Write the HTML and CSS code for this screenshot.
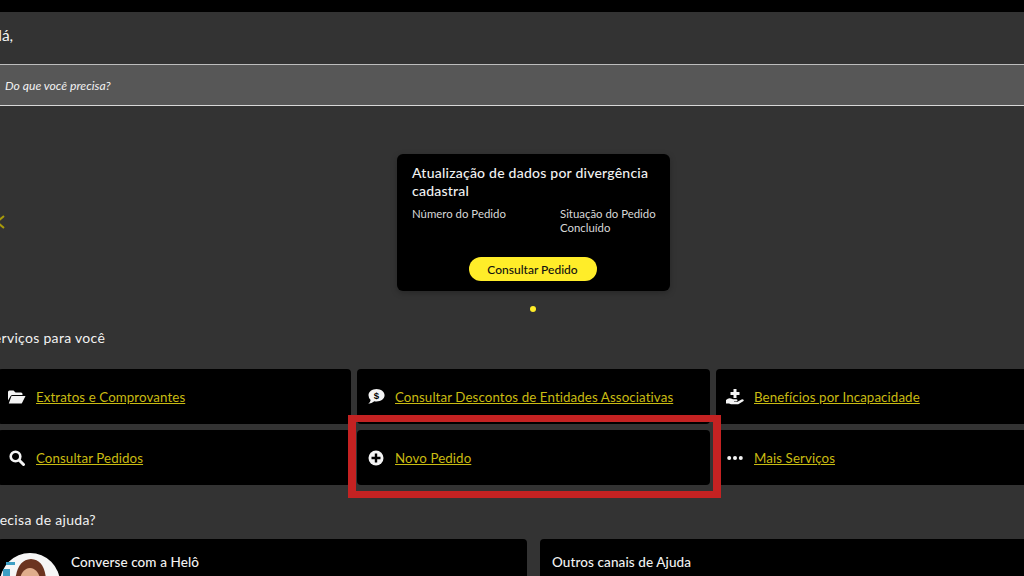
FILE: index.html
```html
<!DOCTYPE html>
<html lang="pt-BR">
<head>
<meta charset="utf-8"/>
<meta content="width=device-width, initial-scale=1.0" name="viewport"/>
<title>Meu INSS</title>
<link rel="stylesheet" href="styles.css">
</head>
<body>
<div class="topo"></div>
<p class="ola">Olá,</p>
<div class="busca">Do que você precisa?</div>
<main class="conteudo">
  <section class="carrossel">
    <svg class="seta" viewBox="0 0 12 16" width="12" height="16"><path d="M10 2 3 8l7 6" fill="none" stroke="#a89a0a" stroke-width="2"/></svg>
    <div class="pedido">
      <h3>Atualização de dados por divergência cadastral</h3>
      <div class="pedido-info">
        <div>Número do Pedido</div>
        <div>Situação do Pedido<br/>Concluído</div>
      </div>
      <button class="botao">Consultar Pedido</button>
    </div>
    <span class="ponto"></span>
  </section>

  <h2>Serviços para você</h2>
  <div class="servicos">
    <div class="servico">
      <svg viewBox="0 0 18 14" width="18" height="14"><path d="M0 2q0-1.500 1.500-1.500h4L7.500 2.500H13q1.500 0 1.500 1.500v1H4.500Q3.200 5 2.600 6L0 10.500Z M3.500 6h14L14 13q-.3.500-1 .500H.8Z" fill="#f4f4f4"/></svg>
      <a href="#">Extratos e Comprovantes</a>
    </div>
    <div class="servico">
      <svg viewBox="0 0 16 14" width="18" height="15"><path d="M8.500 0C12.600 0 16 2.600 16 5.800s-3.400 5.800-7.500 5.800q-1 0-2-.2Q4 13.500.8 13.800q2-1.700 2.200-3.500Q1 8.500 1 5.800C1 2.600 4.400 0 8.500 0Z" fill="#f4f4f4"/><text x="8.500" y="9" font-size="9" font-weight="700" text-anchor="middle" fill="#000" font-family="Liberation Sans">$</text></svg>
      <a href="#">Consultar Descontos de Entidades Associativas</a>
    </div>
    <div class="servico">
      <svg viewBox="0 0 18 16" width="18" height="16"><path d="M7.500 0h3v3h3v3h-3v3h-3V6h-3V3h3Z M0 11q2.500-2.500 5-1.500l2 .7h3.200q1.300 0 1.300 1t-1.300 1H8v.5h3.500l4-2.200q1.300-.5 2 .2t-.3 1.500l-5 3H5L3 14.500H0Z" fill="#f4f4f4"/></svg>
      <a href="#">Benefícios por Incapacidade</a>
    </div>
    <div class="servico">
      <svg viewBox="0 0 16 16" width="18" height="16"><circle cx="6.500" cy="6.500" r="4.800" fill="none" stroke="#f4f4f4" stroke-width="2.600"/><path d="m10 10 4.500 4.500" stroke="#f4f4f4" stroke-width="3" stroke-linecap="round"/></svg>
      <a href="#">Consultar Pedidos</a>
    </div>
    <div class="servico">
      <svg viewBox="0 0 16 16" width="18" height="16"><circle cx="8" cy="8" r="7.500" fill="#f4f4f4"/><path d="M8 3.500v9M3.500 8h9" stroke="#000" stroke-width="2.400"/></svg>
      <a href="#">Novo Pedido</a>
    </div>
    <div class="servico">
      <svg viewBox="0 0 16 16" width="18" height="16"><circle cx="2.200" cy="8" r="2" fill="#f4f4f4"/><circle cx="8" cy="8" r="2" fill="#f4f4f4"/><circle cx="13.800" cy="8" r="2" fill="#f4f4f4"/></svg>
      <a href="#">Mais Serviços</a>
    </div>
  </div>

  <h2 class="ajuda-titulo">Precisa de ajuda?</h2>
  <div class="ajuda">
    <div class="ajuda-card">
      <svg class="avatar" viewBox="0 0 60 60" width="60" height="60">
        <circle cx="30" cy="30" r="30" fill="#f6f6f6"/>
        <path d="M6 9h9v3H6Z" fill="#3d9fc4"/>
        <path d="M3 16h7v30H3Z" fill="#3d9fc4"/>
        <path d="M15 38Q14 7 31 6q17 1 15 32Z" fill="#6b3420"/>
        <ellipse cx="30" cy="28" rx="10" ry="13" fill="#e0ad8c"/>
      </svg>
      <h3>Converse com a Helô</h3>
    </div>
    <div class="ajuda-card">
      <h3>Outros canais de Ajuda</h3>
    </div>
  </div>
</main>
<div class="destaque"></div>
</body>
</html>
```

FILE: styles.css
```css
* {
    box-sizing: border-box;
    margin: 0;
    padding: 0;
}
html, body {
    height: 576px;
    overflow: hidden;
}
body {
    position: relative;
    background-color: #333;
    color: #f2f2f2;
    font-family: 'Lato', 'Liberation Sans', sans-serif;
    font-size: 13px;
}
.topo {
    height: 12px;
    background-color: #000;
}
.ola {
    height: 52px;
    padding-top: 14px;
    margin-left: -14px;
    font-size: 15.500px;
    line-height: 18px;
}
.busca {
    height: 42px;
    padding-left: 5px;
    background-color: #575757;
    border-top: 1px solid #bdbdbd;
    border-bottom: 1px solid #d8d8d8;
    font-size: 12.200px;
    font-style: italic;
    line-height: 42px;
}
.conteudo {
    width: 1071px;
    margin-left: -2px;
}
.carrossel {
    position: relative;
    display: flex;
    flex-direction: column;
    align-items: center;
    height: 224px;
    padding-top: 48px;
}
.seta {
    position: absolute;
    left: -4px;
    top: 108px;
}
.pedido {
    display: flex;
    flex-direction: column;
    width: 273px;
    height: 137px;
    padding: 10px 15px;
    background-color: #000;
    border-radius: 6px;
    box-shadow: 0 2px 6px rgba(0, 0, 0, 0.25);
}
.pedido h3 {
    font-size: 14px;
    font-weight: 500;
    letter-spacing: 0.230px;
    line-height: 18px;
}
.pedido-info {
    display: grid;
    grid-template-columns: 148px 1fr;
    margin-top: 7px;
    font-size: 11.400px;
    line-height: 14px;
    color: #d8d8d8;
    white-space: nowrap;
}
.botao {
    align-self: center;
    width: 128px;
    height: 24px;
    margin-top: auto;
    margin-right: 2px;
    background-color: #ffed29;
    border: none;
    border-radius: 12px;
    color: #111;
    font-family: inherit;
    font-size: 12px;
    font-weight: 500;
}
.ponto {
    width: 6px;
    height: 6px;
    margin-top: 15px;
    margin-right: 2px;
    background-color: #ffed29;
    border-radius: 50%;
}
h2 {
    margin-left: -12px;
    font-size: 14px;
    font-weight: 400;
    line-height: 16px;
    letter-spacing: 0.300px;
}
.servicos {
    display: grid;
    grid-template-columns: repeat(3, 353px);
    gap: 6px;
    margin-top: 23px;
}
.servico {
    display: flex;
    align-items: center;
    height: 55px;
    padding-left: 10px;
    background-color: #000;
    border-radius: 4px;
}
.servico svg {
    flex: none;
    margin-right: 10px;
}
.servico a {
    color: #c9bb12;
    font-size: 13.300px;
    letter-spacing: 0.100px;
}
.ajuda-titulo {
    margin-top: 27px;
}
.ajuda {
    display: grid;
    grid-template-columns: 529px 529px;
    gap: 13px;
    margin-top: 11px;
}
.ajuda-card {
    position: relative;
    display: flex;
    height: 80px;
    padding: 15px 12px;
    background-color: #000;
    border-radius: 4px;
}
.ajuda-card h3 {
    font-size: 13.500px;
    font-weight: 500;
    letter-spacing: 0.100px;
    line-height: 16px;
}
.ajuda-card .avatar {
    flex: none;
    margin: -1px 11px 0 -10px;
}
.destaque {
    position: absolute;
    left: 348px;
    top: 415px;
    width: 373px;
    height: 83px;
    border-style: solid;
    border-color: #c42222;
    border-width: 7px 8px;
}
```
